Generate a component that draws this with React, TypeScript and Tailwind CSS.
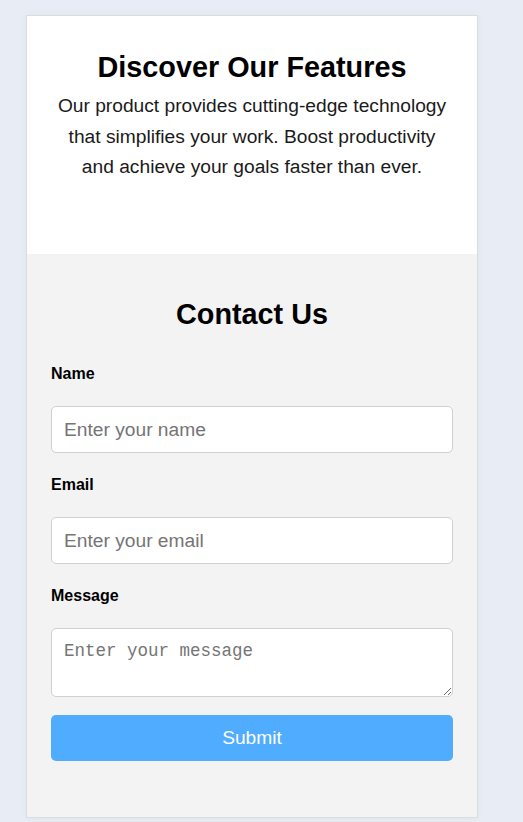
import { FC } from "react";

const Field: FC<{ label: string; placeholder: string; type?: string }> = ({ label, placeholder, type = "text" }) => (
	<div className="flex flex-col">
		<label className="text-[16px] leading-[18px] font-bold text-black">{label}</label>
		<input
			type={type}
			placeholder={placeholder}
			className="mt-[23px] h-[47px] w-full rounded-[5px] border border-[#d0d0d0] bg-white px-3 text-[19.2px] text-black placeholder:text-[#757575] outline-none"
		/>
	</div>
);

export default function App() {
	return (
		<div className="min-h-screen bg-[#e8ecf4] pt-[15px] font-['Liberation_Sans',Arial,sans-serif]">
			<div className="ml-[26px] w-[452px] border border-[#dcdcdc] shadow-[0_0_8px_rgba(0,0,0,0.04)]">
				{/* Features */}
				<section className="bg-white px-6 pt-[35px] pb-[71px] text-center">
					<h1 className="text-[28.8px] leading-[32px] font-bold text-black">Discover Our Features</h1>
					<p className="mt-[8px] text-[19.2px] leading-[30.7px] text-[#1a1a1a]">
						Our product provides cutting-edge technology that simplifies your work. Boost productivity and achieve your goals faster than ever.
					</p>
				</section>

				{/* Contact */}
				<section className="bg-[#f3f3f3] px-6 pt-[44px] pb-[56px]">
					<h2 className="text-center text-[28.8px] leading-[32px] font-bold text-black">Contact Us</h2>
					<form className="mt-[35px] flex flex-col gap-[23px]">
						<Field label="Name" placeholder="Enter your name" />
						<Field label="Email" placeholder="Enter your email" type="email" />
						<div className="flex flex-col">
							<label className="text-[16px] leading-[18px] font-bold text-black">Message</label>
							<textarea
								placeholder="Enter your message"
								className="mt-[23px] h-[69px] w-full rounded-[5px] border border-[#d0d0d0] bg-white px-3 py-[11px] font-['Liberation_Mono',monospace] text-[17.5px] leading-[22px] text-black placeholder:text-[#757575] outline-none"
							/>
						</div>
						<button
							type="button"
							className="-mt-[5px] h-[46px] w-full rounded-[5px] bg-[#50acff] text-[19.2px] text-white"
						>
							Submit
						</button>
					</form>
				</section>
			</div>
		</div>
	);
}
